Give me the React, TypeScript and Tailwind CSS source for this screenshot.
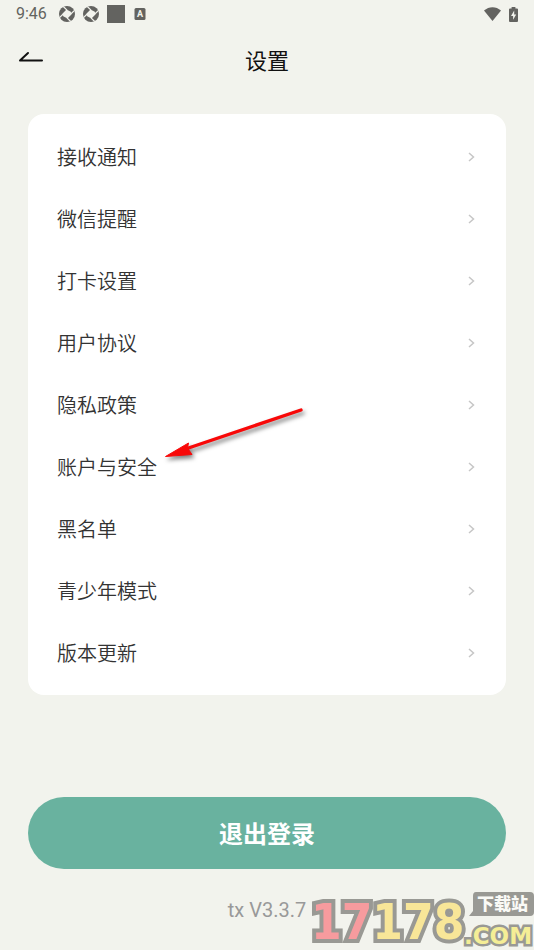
import React from "react";

const items: string[] = [
  "接收通知",
  "微信提醒",
  "打卡设置",
  "用户协议",
  "隐私政策",
  "账户与安全",
  "黑名单",
  "青少年模式",
  "版本更新",
];

function ApertureIcon() {
  return (
    <svg viewBox="0 0 16 16" className="size-4" aria-hidden="true">
      <circle cx="8" cy="8" r="8" fill="#636360" />
      <path d="M7.500 3.600 11.800 5.800 12.400 8.500 8.500 12.400 4.200 10.200 3.600 7.500Z" fill="#f2f3ed" />
      <g stroke="#f2f3ed" strokeWidth="1.200" fill="none">
        <path d="M8 4.200 4.300 0.500M11.800 8 15.500 4.300M8 11.800 11.700 15.500M4.200 8 0.500 11.700" />
      </g>
    </svg>
  );
}

function StatusBar() {
  return (
    <div className="flex h-7 items-center justify-between px-4 text-[#636360]">
      <div className="flex items-center">
        <span className="w-[43px] font-[Roboto,sans-serif] text-base leading-5">9:46</span>
        <div className="flex items-center gap-2">
          <ApertureIcon />
          <ApertureIcon />
          <span className="size-[18px] bg-[#636360]" />
        </div>
        <svg viewBox="0 0 12 12" className="ml-[9px] size-3" aria-hidden="true">
          <rect x="0.5" y="0" width="11" height="12" rx="1.5" fill="#636360" />
          <text x="6" y="9.2" textAnchor="middle" fontSize="9" fontWeight="700" fontFamily="Roboto, sans-serif" fill="#f2f3ed">
            A
          </text>
        </svg>
      </div>
      <div className="flex items-center gap-2">
        <svg viewBox="0 0 17 14" className="h-[14px] w-[17px]" aria-hidden="true">
          <path d="M0 3.6C5-.9 12-.9 17 3.6L8.500 14Z" fill="#636360" />
        </svg>
        <svg viewBox="0 0 9 15" className="h-[15px] w-[9px]" aria-hidden="true">
          <path d="M2.600 0h3.800v1.400H8q1 0 1 1V14q0 1-1 1H1q-1 0-1-1V2.400q0-1 1-1h1.600Z" fill="#636360" />
          <path d="M5.200 3.600 2 9h2.100v3.800L7.200 7.400H5.200Z" fill="#f2f3ed" />
        </svg>
      </div>
    </div>
  );
}

function Header() {
  return (
    <header className="grid h-[62px] grid-cols-[1fr_auto_1fr] items-center px-[18px]">
      <button type="button" aria-label="返回" className="justify-self-start">
        <svg viewBox="0 0 26 18" className="h-[18px] w-[26px]" fill="none" stroke="#111" strokeWidth="2" strokeLinecap="round" strokeLinejoin="round" aria-hidden="true">
          <path d="M10 3 2 10.500H24" />
        </svg>
      </button>
      <h1 className="text-[22px] leading-8 text-[#111]">设置</h1>
    </header>
  );
}

function Pointer() {
  return (
    <svg viewBox="0 0 150 66" className="pointer-events-none absolute top-[402px] left-[160px] h-[66px] w-[150px] drop-shadow-[2px_3px_2px_rgba(0,0,0,0.5)]" aria-hidden="true">
      <path d="M141 8 27 46.500" stroke="#f80808" strokeWidth="3.400" strokeLinecap="round" />
      <path d="M5.500 54.500 28.500 41 27.500 46 32 52.500Z" fill="#f80808" stroke="#f80808" strokeWidth="1" />
    </svg>
  );
}

function SiteMark() {
  return (
    <svg viewBox="0 0 224 60" className="pointer-events-none absolute right-0 bottom-0 h-[60px] w-[224px]" role="img" aria-label="17178.com 下载站">
      <text
        x="1"
        y="49"
        fontFamily="'DejaVu Sans Condensed', 'DejaVu Sans', sans-serif"
        fontWeight="700"
        fontSize="49"
        stroke="#999994"
        strokeWidth="8"
        paintOrder="stroke"
      >
        <tspan fill="#f79b9e">17</tspan>
        <tspan fill="#f8e698">178</tspan>
      </text>
      <path d="M166 2H220q4 0 4 4V22q0 4-4 4H159l4-5V6q0-4 3-4Z" fill="#999994" />
      <text x="167" y="20" fontFamily="'Noto Sans CJK SC', sans-serif" fontWeight="900" fontSize="17" fill="#fafaf6">
        下载站
      </text>
      <text x="154" y="54" fontFamily="'DejaVu Sans', sans-serif" fontWeight="700" fontSize="23" fill="#f5ee96" stroke="#999994" strokeWidth="5" paintOrder="stroke">
        .COM
      </text>
    </svg>
  );
}

export default function App() {
  return (
    <div className="relative min-h-screen overflow-hidden bg-[#f2f3ed] font-['Noto_Sans_CJK_SC',sans-serif]">
      <StatusBar />
      <Header />
      <main className="px-7 pt-6">
        <nav className="rounded-2xl bg-white px-[29px] pt-3 pb-[11px]">
          <ul>
            {items.map((item) => (
              <li key={item}>
                <a href="#" className="flex h-[62px] items-center justify-between text-xl font-[350] text-[#333]">
                  {item}
                  <svg viewBox="0 0 10 12" className="h-3 w-[10px]" fill="none" stroke="#c6c6c6" strokeWidth="1.500" aria-hidden="true">
                    <path d="M2 2 6.500 6 2 10" />
                  </svg>
                </a>
              </li>
            ))}
          </ul>
        </nav>
        <button type="button" className="mt-[102px] block h-[72px] w-full rounded-full bg-[#69b29f] text-2xl font-bold text-white">
          退出登录
        </button>
        <p className="mt-7 text-center font-[Roboto,sans-serif] text-xl leading-[26px] text-[#999]">tx V3.3.7</p>
      </main>
      <Pointer />
      <SiteMark />
    </div>
  );
}
